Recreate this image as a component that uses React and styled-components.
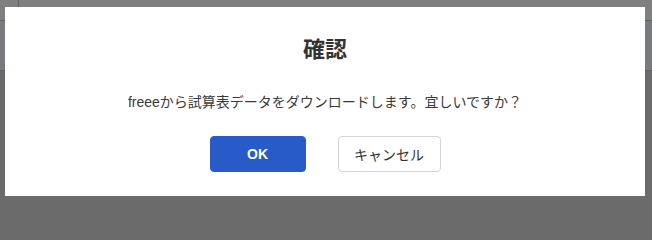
import React from "react";
import styled, { createGlobalStyle } from "styled-components";

const GlobalStyle = createGlobalStyle`
  html, body {
    margin: 0;
    overflow: hidden;
  }
  body {
    font-family: "Liberation Sans", "Noto Sans CJK JP", sans-serif;
  }
`;

const Page = styled.div`
  position: relative;
  width: 100%;
  min-width: 652px;
  height: 100vh;
  min-height: 203px;
  display: flex;
  flex-direction: column;
  background: #d7d7d7;
`;

const Header = styled.div`
  height: 20px;
  display: flex;
  background: #fff;
`;

const HeaderCell = styled.div`
  width: ${(p) => p.width || "auto"};
  flex: ${(p) => (p.width ? "none" : 1)};
  border-right: ${(p) => (p.width ? "1px solid #b4c4da" : "none")};
`;

const Band = styled.div`
  height: 49px;
  background: #f1f5fa;
  border-top: 1px solid #b4c4da;
  border-bottom: 1px solid #b4c4da;
`;

const Body = styled.div`
  flex: 1;
`;

const Overlay = styled.div`
  position: absolute;
  inset: 0;
  background: rgba(0, 0, 0, 0.5);
  padding: 7px 0 0 5px;
`;

const Dialog = styled.div`
  width: 640px;
  height: 189px;
  box-sizing: border-box;
  background: #fff;
  padding: 24px 0;
  display: flex;
  flex-direction: column;
  align-items: center;
  color: #333;
`;

const Title = styled.h2`
  margin: 0;
  font-family: "Noto Sans CJK JP", sans-serif;
  font-size: 22px;
  font-weight: 700;
  line-height: 32px;
  color: #333;
`;

const Message = styled.p`
  margin: 29px 0 0;
  font-size: 14px;
  line-height: 20px;
  color: #3a3a3a;
`;

const Actions = styled.div`
  margin-top: 24px;
  display: flex;
  gap: 32px;
`;

const Button = styled.button`
  height: 36px;
  width: ${(p) => (p.$primary ? "96px" : "103px")};
  box-sizing: border-box;
  border-radius: 4px;
  border: 1px solid ${(p) => (p.$primary ? "#285bc7" : "#d4d4d4")};
  background: ${(p) => (p.$primary ? "#285bc7" : "#fff")};
  color: ${(p) => (p.$primary ? "#fff" : "#333")};
  font-family: "Liberation Sans", "Noto Sans CJK JP", sans-serif;
  font-size: 14px;
  font-weight: ${(p) => (p.$primary ? 700 : 400)};
  cursor: pointer;
  padding: 0;
`;

export default function App() {
  return (
    <>
      <GlobalStyle />
      <Page>
        <Header>
          <HeaderCell width="18px" />
          <HeaderCell />
        </Header>
        <Band />
        <Body />
        <Overlay>
          <Dialog role="dialog">
            <Title>確認</Title>
            <Message>freeeから試算表データをダウンロードします。宜しいですか？</Message>
            <Actions>
              <Button $primary>OK</Button>
              <Button>キャンセル</Button>
            </Actions>
          </Dialog>
        </Overlay>
      </Page>
    </>
  );
}
